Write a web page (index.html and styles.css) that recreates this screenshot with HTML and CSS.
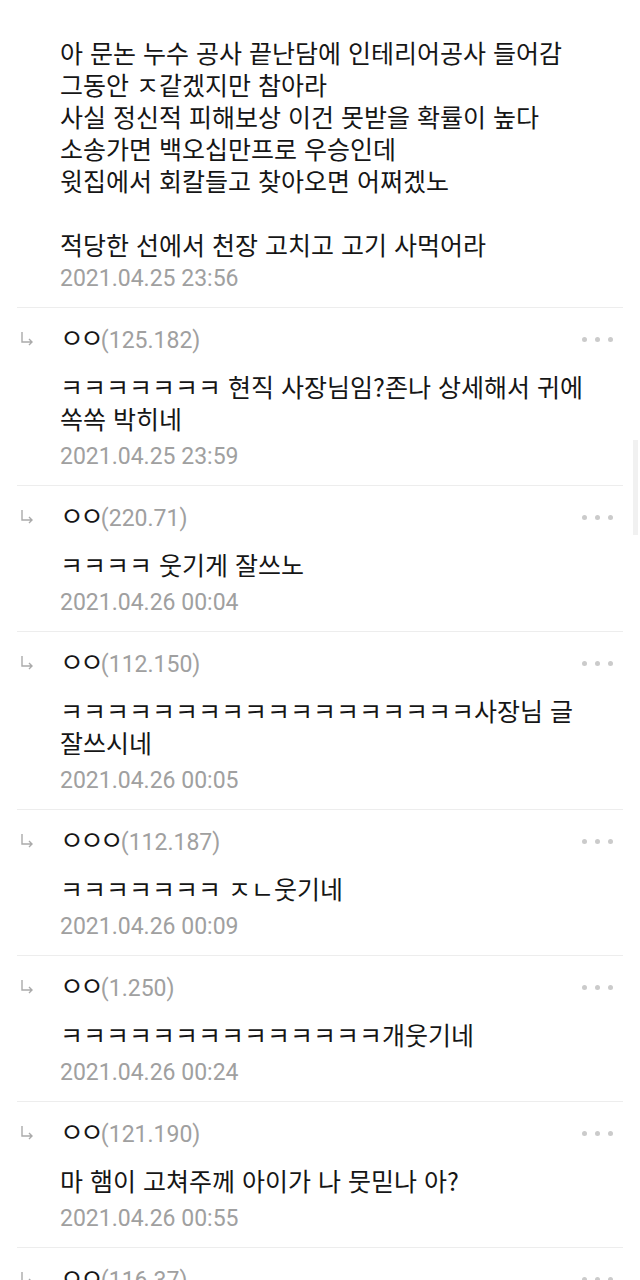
FILE: index.html
```html
<!DOCTYPE html>
<html lang="ko">
<head>
    <meta charset="UTF-8">
    <meta name="viewport" content="width=device-width, initial-scale=1.0">
    <title>댓글</title>
    <link rel="stylesheet" href="styles.css">
</head>
<body>
    <div class="page">
        <div class="post">
            <p class="post-text">아 문논 누수 공사 끝난담에 인테리어공사 들어감<br>그동안 ㅈ같겠지만 참아라<br>사실 정신적 피해보상 이건 못받을 확률이 높다<br>소송가면 백오십만프로 우승인데<br>윗집에서 회칼들고 찾아오면 어쩌겠노<br><br>적당한 선에서 천장 고치고 고기 사먹어라</p>
            <div class="date">2021.04.25 23:56</div>
        </div>

        <div class="comment">
            <svg class="reply-icon" width="14" height="16" viewBox="0 0 14 16"><path d="M2 1V11H12M9 8L12 11L9 14" fill="none" stroke="#aaa" stroke-width="1.4"/></svg>
            <div class="comment-head">
                <span class="nick">ㅇㅇ<span class="ip">(125.182)</span></span>
                <span class="more"><i></i><i></i><i></i></span>
            </div>
            <p class="comment-text">ㅋㅋㅋㅋㅋㅋㅋ 현직 사장님임?존나 상세해서 귀에<br>쏙쏙 박히네</p>
            <div class="date">2021.04.25 23:59</div>
        </div>

        <div class="comment">
            <svg class="reply-icon" width="14" height="16" viewBox="0 0 14 16"><path d="M2 1V11H12M9 8L12 11L9 14" fill="none" stroke="#aaa" stroke-width="1.4"/></svg>
            <div class="comment-head">
                <span class="nick">ㅇㅇ<span class="ip">(220.71)</span></span>
                <span class="more"><i></i><i></i><i></i></span>
            </div>
            <p class="comment-text">ㅋㅋㅋㅋ 웃기게 잘쓰노</p>
            <div class="date">2021.04.26 00:04</div>
        </div>

        <div class="comment">
            <svg class="reply-icon" width="14" height="16" viewBox="0 0 14 16"><path d="M2 1V11H12M9 8L12 11L9 14" fill="none" stroke="#aaa" stroke-width="1.4"/></svg>
            <div class="comment-head">
                <span class="nick">ㅇㅇ<span class="ip">(112.150)</span></span>
                <span class="more"><i></i><i></i><i></i></span>
            </div>
            <p class="comment-text">ㅋㅋㅋㅋㅋㅋㅋㅋㅋㅋㅋㅋㅋㅋㅋㅋㅋㅋ사장님 글<br>잘쓰시네</p>
            <div class="date">2021.04.26 00:05</div>
        </div>

        <div class="comment">
            <svg class="reply-icon" width="14" height="16" viewBox="0 0 14 16"><path d="M2 1V11H12M9 8L12 11L9 14" fill="none" stroke="#aaa" stroke-width="1.4"/></svg>
            <div class="comment-head">
                <span class="nick">ㅇㅇㅇ<span class="ip">(112.187)</span></span>
                <span class="more"><i></i><i></i><i></i></span>
            </div>
            <p class="comment-text">ㅋㅋㅋㅋㅋㅋㅋ ㅈㄴ웃기네</p>
            <div class="date">2021.04.26 00:09</div>
        </div>

        <div class="comment">
            <svg class="reply-icon" width="14" height="16" viewBox="0 0 14 16"><path d="M2 1V11H12M9 8L12 11L9 14" fill="none" stroke="#aaa" stroke-width="1.4"/></svg>
            <div class="comment-head">
                <span class="nick">ㅇㅇ<span class="ip">(1.250)</span></span>
                <span class="more"><i></i><i></i><i></i></span>
            </div>
            <p class="comment-text">ㅋㅋㅋㅋㅋㅋㅋㅋㅋㅋㅋㅋㅋㅋ개웃기네</p>
            <div class="date">2021.04.26 00:24</div>
        </div>

        <div class="comment">
            <svg class="reply-icon" width="14" height="16" viewBox="0 0 14 16"><path d="M2 1V11H12M9 8L12 11L9 14" fill="none" stroke="#aaa" stroke-width="1.4"/></svg>
            <div class="comment-head">
                <span class="nick">ㅇㅇ<span class="ip">(121.190)</span></span>
                <span class="more"><i></i><i></i><i></i></span>
            </div>
            <p class="comment-text">마 햄이 고쳐주께 아이가 나 뭇믿나 아?</p>
            <div class="date">2021.04.26 00:55</div>
        </div>

        <div class="comment">
            <svg class="reply-icon" width="14" height="16" viewBox="0 0 14 16"><path d="M2 1V11H12M9 8L12 11L9 14" fill="none" stroke="#aaa" stroke-width="1.4"/></svg>
            <div class="comment-head">
                <span class="nick">ㅇㅇ<span class="ip">(116.37)</span></span>
                <span class="more"><i></i><i></i><i></i></span>
            </div>
            <p class="comment-text">ㅋㅋㅋㅋㅋㅋ</p>
            <div class="date">2021.04.26 01:02</div>
        </div>

        <div class="scroll-thumb"></div>
    </div>
</body>
</html>
```

FILE: styles.css
```css
body {
    margin: 0;
    padding: 0;
    background-color: #fff;
    color: #161616;
    font-family: "Noto Sans CJK KR", sans-serif;
}

.page {
    position: relative;
    height: 1280px;
    overflow: hidden;
}

.post {
    padding: 36px 17px 14px 60px;
}

.post-text,
.comment-text {
    margin: 0;
    font-size: 25px;
    line-height: 32px;
}

.date {
    font-family: Roboto, sans-serif;
    font-size: 23px;
    line-height: 28px;
    color: #a0a0a0;
}

.post .date {
    margin-top: 5px;
}

.comment {
    display: grid;
    grid-template-columns: 43px 1fr;
    margin: 0 17px;
    padding: 16px 0 14px 0;
    border-top: 1px solid #ededed;
}

.reply-icon {
    grid-column: 1;
    grid-row: 1;
    margin: 7px 0 0 3px;
}

.comment-head {
    grid-column: 2;
    display: flex;
    justify-content: space-between;
    align-items: center;
    height: 30px;
    padding-right: 10px;
}

.nick {
    font-size: 26px;
    letter-spacing: -4px;
    line-height: 30px;
}

.ip {
    font-family: Roboto, sans-serif;
    font-size: 23px;
    letter-spacing: 0;
    margin-left: 1px;
    color: #a0a0a0;
}

.more {
    display: flex;
    gap: 8px;
}

.more i {
    width: 5px;
    height: 5px;
    border-radius: 50%;
    background-color: #cbcbcb;
}

.comment-text {
    grid-column: 2;
    margin-top: 16px;
    padding-right: 10px;
}

.comment .date {
    grid-column: 2;
    margin-top: 9px;
}

.scroll-thumb {
    position: absolute;
    top: 440px;
    right: 2px;
    width: 5px;
    height: 95px;
    background-color: #f1f1f1;
}
```
